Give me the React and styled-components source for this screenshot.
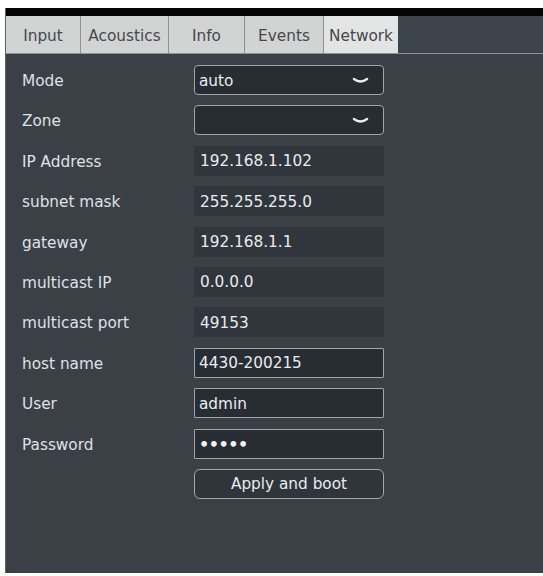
import React from 'react';
import styled, { createGlobalStyle } from 'styled-components';

const Global = createGlobalStyle`
  html, body { margin: 0; padding: 0; background: #fff; }
  body { font-family: "DejaVu Sans", Verdana, sans-serif; }
`;

const Page = styled.div`
  width: 543px;
  height: 576px;
  padding: 8px 0 3px 5px;
  box-sizing: border-box;
`;

const Panel = styled.div`
  height: 100%;
  display: flex;
  flex-direction: column;
  background: #3b4047;
  border-left: 1px solid #59606a;
`;

const TopBar = styled.div`
  height: 8px;
  background: #050505;
`;

const TabRow = styled.div`
  display: flex;
  height: 37px;
  border-bottom: 1px solid #8c9197;
  background: #3d434a;
`;

const Tab = styled.div`
  width: ${p => p.w}px;
  display: flex;
  align-items: center;
  justify-content: center;
  padding-top: 2px;
  box-sizing: border-box;
  background: ${p => (p.active ? '#e3e4e4' : '#d2d3d3')};
  border-right: ${p => (p.active ? 'none' : '1px solid #8e9092')};
  color: #45484c;
  font-size: 15.3px;
  overflow: hidden;
  white-space: nowrap;
`;

const Form = styled.div`
  display: grid;
  grid-template-columns: 172px 190px;
  grid-auto-rows: 30px;
  row-gap: 10.4px;
  padding: 11px 0 0 16px;
`;

const Label = styled.div`
  display: flex;
  align-items: center;
  padding-top: 2px;
  color: #dfe2e5;
  font-size: 15.3px;
`;

const Field = styled.div`
  display: flex;
  align-items: center;
  justify-content: space-between;
  box-sizing: border-box;
  padding: 1px 14px 0 ${p => (p.boxed ? 4 : 6)}px;
  background: ${p => (p.boxed ? '#282d34' : '#31363d')};
  border: ${p => (p.boxed ? '1.5px solid #a0a5ab' : 'none')};
  border-radius: ${p => (p.round ? 4 : 1)}px;
  color: #e9ecee;
  font-size: 15.3px;
`;

const Dots = styled.span`
  font-size: 16px;
  font-weight: bold;
  letter-spacing: -0.5px;
  color: #f2f2f2;
`;

const Button = styled.button`
  grid-column: 2;
  background: #30353c;
  border: 1.5px solid #a3a8ae;
  border-radius: 6px;
  color: #e9ecee;
  font-family: "DejaVu Sans", Verdana, sans-serif;
  font-size: 15.3px;
  padding: 0;
`;

const Chevron = () => (
  <svg width="17" height="8" viewBox="0 0 17 8">
    <path d="M2 2 Q8.5 7 15 2" fill="none" stroke="#f0f0f0" strokeWidth="2.4" strokeLinecap="round" />
  </svg>
);

const tabs = [
  { name: 'Input', w: 75 },
  { name: 'Acoustics', w: 88 },
  { name: 'Info', w: 76 },
  { name: 'Events', w: 79 },
  { name: 'Network', w: 74, active: true },
];

const rows = [
  { label: 'IP Address', value: '192.168.1.102' },
  { label: 'subnet mask', value: '255.255.255.0' },
  { label: 'gateway', value: '192.168.1.1' },
  { label: 'multicast IP', value: '0.0.0.0' },
  { label: 'multicast port', value: '49153' },
];

export default function App() {
  return (
    <Page>
      <Global />
      <Panel>
        <TopBar />
        <TabRow>
          {tabs.map(t => (
            <Tab key={t.name} w={t.w} active={t.active}>{t.name}</Tab>
          ))}
        </TabRow>
        <Form>
          <Label>Mode</Label>
          <Field boxed round>auto<Chevron /></Field>
          <Label>Zone</Label>
          <Field boxed round><span /><Chevron /></Field>
          {rows.map(r => (
            <React.Fragment key={r.label}>
              <Label>{r.label}</Label>
              <Field>{r.value}</Field>
            </React.Fragment>
          ))}
          <Label>host name</Label>
          <Field boxed>4430-200215</Field>
          <Label>User</Label>
          <Field boxed>admin</Field>
          <Label>Password</Label>
          <Field boxed><Dots>•••••</Dots></Field>
          <Button>Apply and boot</Button>
        </Form>
      </Panel>
    </Page>
  );
}
